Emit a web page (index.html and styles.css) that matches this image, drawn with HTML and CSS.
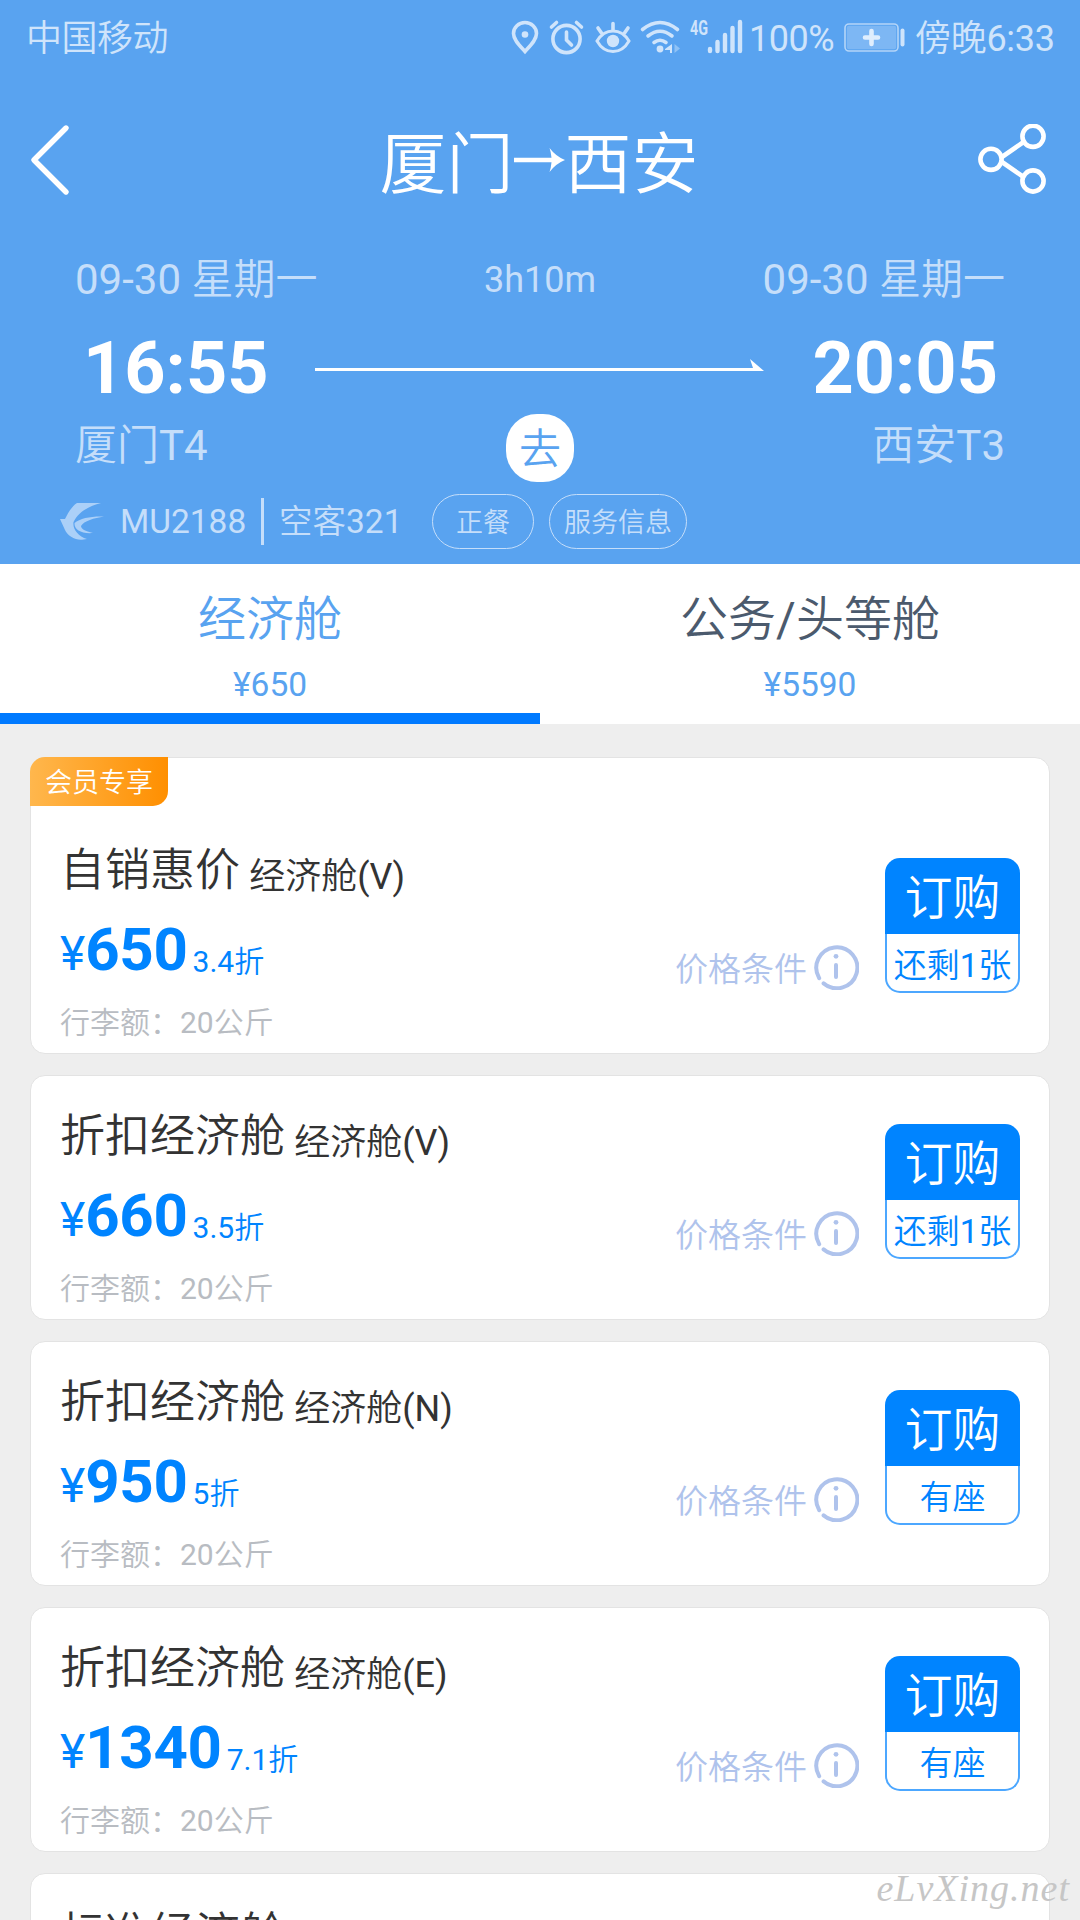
FILE: index.html
```html
<!DOCTYPE html>
<html lang="zh-CN">
<head>
    <meta charset="UTF-8">
    <meta name="viewport" content="width=device-width, initial-scale=1.0">
    <title>厦门→西安</title>
    <link rel="stylesheet" href="styles.css">
</head>
<body>
    <!-- 公用图标 -->
    <svg class="sprite" width="0" height="0">
        <symbol id="icon-info" viewBox="0 0 46 46">
            <path d="M6.2 34.2A20.5 20.5 0 1 1 10.6 39.4" fill="none" stroke="currentColor" stroke-width="4" stroke-linecap="round"/>
            <circle cx="23" cy="12.3" r="2.4" fill="currentColor"/>
            <path d="M23 21v12" stroke="currentColor" stroke-width="4" stroke-linecap="round"/>
        </symbol>
    </svg>

    <div class="page">
        <div class="flight-header">
            <!-- 系统状态栏 -->
            <div class="status-bar">
                <span class="carrier">中国移动</span>
                <svg class="status-icons" width="232" height="36" viewBox="511 18 232 36" fill="none" stroke="#cfe4fb" stroke-width="3.6" stroke-linecap="round">
                    <path d="M525 50.5C520 45 513.5 39 513.5 32.5a11.5 11 0 0 1 23 0C536.5 39 530 45 525 50.5z"/>
                    <circle cx="525" cy="33.5" r="3.3" fill="#cfe4fb" stroke="none"/>
                    <circle cx="566.5" cy="38" r="13.6"/>
                    <path d="M566.5 31v8l5 5M551.5 26l5-4.5M581.5 26l-5-4.5"/>
                    <path d="M597 40c8-13.5 24-13.5 32 0c-8 14-24 14-32 0z" stroke-width="3"/>
                    <circle cx="613" cy="40" r="6.2" fill="#cfe4fb" stroke="none"/>
                    <path d="M613 22.5v6M598 27l3.5 5M628 27l-3.5 5"/>
                    <path d="M642.5 28.5q17.5-14 35 0M648 35q12-9.5 24 0M654 41.5q6-4.5 12 0"/>
                    <circle cx="660" cy="48" r="3.4" fill="#cfe4fb" stroke="none"/>
                    <path d="M672 43v9h-2v-3h-5v-1z" fill="#cfe4fb" stroke="none"/>
                    <path d="M674.5 43l5.5 4.5l-5.5 4.5z" fill="#8fc2f6" stroke="none"/>
                    <path d="M710 48v2M717.5 41v9M725 34v16M732.5 27v23M740 21v29" stroke-width="4.4"/>
                    <text class="net-type" x="690" y="34" textLength="18" lengthAdjust="spacingAndGlyphs">4G</text>
                </svg>
                <span class="battery-text">100%</span>
                <svg class="battery" width="61" height="36" viewBox="0 -4 61 36">
                    <rect x="1" y="1" width="53" height="27" rx="4" fill="none" stroke="#b4d5f8" stroke-width="1.6"/>
                    <rect x="2.8" y="2.8" width="49.4" height="23.4" rx="2" fill="#7db7f4"/>
                    <path d="M27.5 8v13M21 14.5h13" stroke="#e0eefd" stroke-width="4.6" stroke-linecap="round"/>
                    <path d="M58.5 7.5v14" stroke="#cfe4fb" stroke-width="4" stroke-linecap="round"/>
                </svg>
                <span class="clock">傍晚6:33</span>
            </div>

            <!-- 标题栏 -->
            <div class="title-bar">
                <svg class="back" width="40" height="74" viewBox="0 0 40 74" fill="none" stroke="#fff" stroke-width="5.4" stroke-linecap="round" stroke-linejoin="round">
                    <path d="M36 5L4 37L36 69"/>
                </svg>
                <h1 class="route">厦门
                    <svg class="to" width="51" height="26" viewBox="0 0 51 26" fill="#fff">
                        <path d="M0 10.8H37.5Q37 5 35.5 1Q42 9.5 51 13Q42 16.5 35.5 25Q37 21 37.5 15.2H0z"/>
                    </svg>
                西安</h1>
                <svg class="share" width="70" height="72" viewBox="0 0 70 72" fill="none" stroke="#fff" stroke-width="4.6">
                    <circle cx="13" cy="35.3" r="10.6"/>
                    <circle cx="55" cy="12.3" r="10.6"/>
                    <circle cx="55" cy="57" r="10.6"/>
                    <path d="M22.5 34L47 17M22.5 37L47 54"/>
                </svg>
            </div>

            <!-- 航班时间 -->
            <div class="flight-dates">
                <span>09-30 星期一</span>
                <span class="duration">3h10m</span>
                <span>09-30 星期一</span>
            </div>
            <div class="flight-times">
                <span class="time">16:55</span>
                <svg class="line" width="450" height="14" viewBox="0 0 450 14" fill="#fff">
                    <path d="M0 10H438L435 1L449 13H0z"/>
                </svg>
                <span class="time">20:05</span>
            </div>
            <div class="flight-airports">
                <span>厦门T4</span>
                <span class="leg">去</span>
                <span>西安T3</span>
            </div>
            <div class="flight-info">
                <svg class="airline" width="46" height="40" viewBox="0 0 46 40" fill="#abd0f8">
                    <path d="M17 1H41C30 4 19 9 13.5 20C12.5 27 18 34 27 37C22 38 19 38 16 37C10 35 7 32 5 28L0 17H5C8 11 12 4 17 1z"/>
                    <path d="M44 14.5C32 14 20 16 14.5 21C14 28 22 32 33 31C25 29 21 27 21 24C24 19 34 16 44 14.5z"/>
                </svg>
                <span class="flight-no">MU2188</span>
                <span class="plane">空客321</span>
                <span class="pill meal">正餐</span>
                <span class="pill">服务信息</span>
            </div>
        </div>

        <!-- 舱位切换 -->
        <div class="cabin-tabs">
            <div class="tab active">
                <span class="tab-name">经济舱</span>
                <span class="tab-price">¥650</span>
            </div>
            <div class="tab">
                <span class="tab-name">公务/头等舱</span>
                <span class="tab-price">¥5590</span>
            </div>
        </div>

        <!-- 价格列表 -->
        <div class="fare-list">
            <div class="fare-card member">
                <span class="member-tag">会员专享</span>
                <div class="fare-main">
                    <div class="fare-title">自销惠价 <span class="cabin">经济舱(V)</span></div>
                    <div class="fare-price"><span class="yen">¥</span><b>650</b><span class="discount">3.4折</span></div>
                    <div class="luggage">行李额：20公斤</div>
                </div>
                <div class="fare-rule">价格条件<svg width="46" height="46"><use href="#icon-info"/></svg></div>
                <div class="buy">
                    <span class="buy-text">订购</span>
                    <span class="seats">还剩1张</span>
                </div>
            </div>

            <div class="fare-card">
                <div class="fare-main">
                    <div class="fare-title">折扣经济舱 <span class="cabin">经济舱(V)</span></div>
                    <div class="fare-price"><span class="yen">¥</span><b>660</b><span class="discount">3.5折</span></div>
                    <div class="luggage">行李额：20公斤</div>
                </div>
                <div class="fare-rule">价格条件<svg width="46" height="46"><use href="#icon-info"/></svg></div>
                <div class="buy">
                    <span class="buy-text">订购</span>
                    <span class="seats">还剩1张</span>
                </div>
            </div>

            <div class="fare-card">
                <div class="fare-main">
                    <div class="fare-title">折扣经济舱 <span class="cabin">经济舱(N)</span></div>
                    <div class="fare-price"><span class="yen">¥</span><b>950</b><span class="discount">5折</span></div>
                    <div class="luggage">行李额：20公斤</div>
                </div>
                <div class="fare-rule">价格条件<svg width="46" height="46"><use href="#icon-info"/></svg></div>
                <div class="buy">
                    <span class="buy-text">订购</span>
                    <span class="seats">有座</span>
                </div>
            </div>

            <div class="fare-card">
                <div class="fare-main">
                    <div class="fare-title">折扣经济舱 <span class="cabin">经济舱(E)</span></div>
                    <div class="fare-price"><span class="yen">¥</span><b>1340</b><span class="discount">7.1折</span></div>
                    <div class="luggage">行李额：20公斤</div>
                </div>
                <div class="fare-rule">价格条件<svg width="46" height="46"><use href="#icon-info"/></svg></div>
                <div class="buy">
                    <span class="buy-text">订购</span>
                    <span class="seats">有座</span>
                </div>
            </div>

            <div class="fare-card">
                <div class="fare-main">
                    <div class="fare-title">标准经济舱</div>
                </div>
            </div>
        </div>

        <div class="watermark">eLvXing.net</div>
    </div>
</body>
</html>
```
FILE: styles.css
```css
* {
    box-sizing: border-box;
}
body {
    margin: 0;
    background-color: #eee;
    font-family: Roboto, "Noto Sans CJK SC DemiLight", "Noto Sans CJK SC", sans-serif;
    font-weight: 400;
    color: #333;
}
svg {
    display: block;
    flex-shrink: 0;
}
.sprite {
    position: absolute;
}
.page {
    position: relative;
    width: 1080px;
    height: 1920px;
    overflow: hidden;
    display: flex;
    flex-direction: column;
}

/* 顶部航班信息 */
.flight-header {
    height: 564px;
    flex-shrink: 0;
    background-color: #59a3f0;
    color: #c5defa;
}
.status-bar {
    height: 74px;
    padding: 0 25px 0 26px;
    display: flex;
    align-items: center;
    font-size: 36px;
    line-height: 70px;
    color: #cfe4fb;
}
.carrier {
    padding-top: 3px;
    letter-spacing: -0.5px;
}
.status-icons {
    margin-left: auto;
    overflow: visible;
}
.net-type {
    font-family: Roboto, sans-serif;
    font-size: 21px;
    font-weight: 700;
    fill: #cfe4fb;
    stroke: none;
}
.battery-text {
    width: 88px;
    margin-left: 6px;
    padding-top: 3px;
    letter-spacing: -0.5px;
}
.battery {
    margin: 0 10px 0 7px;
}
.clock {
    width: 140px;
    padding-top: 3px;
    letter-spacing: -0.3px;
    white-space: nowrap;
}

/* 标题栏 */
.title-bar {
    height: 172px;
    padding: 0 32px 0 30px;
    display: grid;
    grid-template-columns: 1fr auto 1fr;
    align-items: center;
    color: #fff;
}
.route {
    margin: 0;
    padding-top: 9px;
    display: flex;
    align-items: center;
    font-size: 67px;
    font-weight: 400;
    line-height: 90px;
}
.route .to {
    margin-top: -9px;
}
.share {
    justify-self: end;
}

/* 日期、时间、机场 */
.flight-dates,
.flight-airports {
    display: grid;
    grid-template-columns: 1fr auto 1fr;
    align-items: center;
    padding: 0 75px;
    font-size: 42px;
    line-height: 64px;
}
.flight-dates {
    padding-top: 2px;
}
.flight-dates > :last-child,
.flight-airports > :last-child {
    text-align: right;
}
.duration {
    font-size: 36px;
}
.flight-times {
    height: 102px;
    padding: 0 82px 0 83px;
    display: flex;
    align-items: center;
    justify-content: space-between;
}
.time {
    padding-top: 10px;
    font-size: 72px;
    font-weight: 700;
    color: #fff;
}
.line {
    margin: 4px 1px 0 0;
}
.flight-airports {
    height: 68px;
    line-height: 60px;
}
.flight-airports > :not(.leg) {
    margin-top: -5px;
}
.leg {
    width: 68px;
    height: 68px;
    border-radius: 31px;
    background-color: #fff;
    color: #59a3f0;
    text-align: center;
    line-height: 71px;
}
.flight-info {
    height: 80px;
    padding-left: 60px;
    display: flex;
    align-items: center;
    font-size: 33.5px;
}
.flight-no {
    width: 144px;
    margin: -2px 0 0 14px;
    border-right: 3px solid #c5defa;
    line-height: 47px;
}
.plane {
    width: 118px;
    margin: -1px 0 0 15px;
    line-height: 47px;
    white-space: nowrap;
}
.pill {
    height: 55px;
    margin: -2px 0 0 15px;
    padding: 0 14px;
    border: 1px solid #c5defa;
    border-radius: 28px;
    font-size: 27px;
    line-height: 57px;
}
.pill.meal {
    margin-left: 35px;
    padding: 0 23px;
}

/* 舱位切换 */
.cabin-tabs {
    height: 160px;
    flex-shrink: 0;
    display: flex;
    background-color: #fff;
}
.tab {
    flex: 1;
    display: flex;
    flex-direction: column;
    align-items: center;
    padding-top: 21px;
    border-bottom: 11px solid transparent;
}
.tab.active {
    border-bottom-color: #007aff;
}
.tab-name {
    font-size: 48px;
    line-height: 70px;
    color: #4b5a6d;
}
.tab.active .tab-name {
    color: #59a3f0;
}
.tab-price {
    margin-top: 10px;
    font-size: 33.5px;
    line-height: 40px;
    color: #59a3f0;
}

/* 价格卡片 */
.fare-list {
    padding: 33px 30px 0;
    display: flex;
    flex-direction: column;
    gap: 21px;
}
.fare-card {
    position: relative;
    height: 245px;
    flex-shrink: 0;
    padding: 0 29px;
    display: flex;
    background-color: #fff;
    border: 1px solid #e3e3e3;
    border-radius: 15px;
}
.fare-card.member {
    height: 297px;
    padding-top: 52px;
}
.member-tag {
    position: absolute;
    top: -1px;
    left: -1px;
    width: 138px;
    height: 49px;
    border-radius: 15px 0;
    background: linear-gradient(to right, #ffb74d, #ff8f00);
    color: #fff;
    font-size: 27px;
    line-height: 52px;
    text-align: center;
}
.fare-main {
    flex: 1;
    white-space: nowrap;
}
.fare-title {
    height: 60px;
    margin-top: 31px;
    font-size: 45px;
    line-height: 60px;
}
.cabin {
    position: relative;
    top: 3px;
    margin-left: -2px;
    font-size: 36px;
}
.fare-price {
    height: 70px;
    margin-top: 14px;
    line-height: 70px;
    color: #0084ff;
}
.yen {
    font-size: 48px;
}
.fare-price b {
    font-size: 60px;
    font-weight: 700;
    letter-spacing: -0.3px;
}
.discount {
    position: relative;
    top: 2px;
    margin-left: 5px;
    font-size: 30px;
}
.luggage {
    margin-top: 16px;
    font-size: 30px;
    line-height: 44px;
    color: #b8bcc2;
}
.fare-rule {
    height: 46px;
    margin: 134px 25px 0 0;
    display: flex;
    align-items: center;
    gap: 6px;
    font-size: 33px;
    color: #afc3ec;
}
.fare-rule svg {
    margin-right: 1px;
}
.buy {
    width: 135px;
    height: 135px;
    margin-top: 48px;
    display: flex;
    flex-direction: column;
    text-align: center;
}
.buy-text {
    height: 76px;
    border-radius: 15px 15px 0 0;
    background-color: #0084ff;
    color: #fff;
    font-size: 48px;
    line-height: 82px;
}
.seats {
    height: 59px;
    padding-top: 5px;
    border: 2px solid #4ca7ff;
    border-top: 0;
    border-radius: 0 0 15px 15px;
    color: #0084ff;
    font-size: 33px;
    line-height: 53px;
    white-space: nowrap;
}

/* 水印 */
.watermark {
    position: absolute;
    right: 10px;
    bottom: 10px;
    font-family: "Liberation Serif", serif;
    font-size: 38px;
    font-style: italic;
    font-weight: 400;
    letter-spacing: 1px;
    color: #c6c6c6;
}
```
